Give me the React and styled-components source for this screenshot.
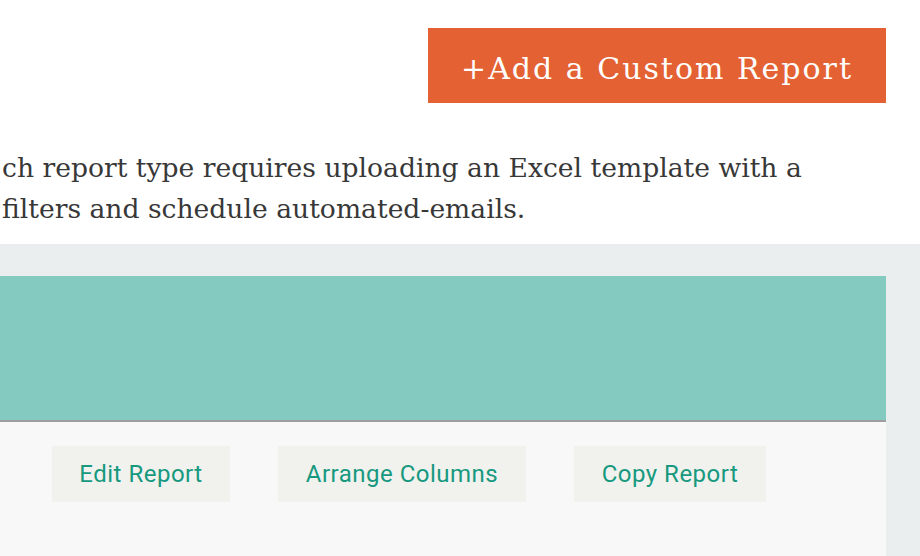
import React from 'react';
import styled, { createGlobalStyle } from 'styled-components';

const GlobalStyle = createGlobalStyle`
  html, body {
    margin: 0;
    padding: 0;
    background: #ffffff;
    overflow: hidden;
  }
  body {
    width: 920px;
    height: 556px;
  }
`;

const Page = styled.div`
  width: 920px;
  height: 556px;
  display: flex;
  flex-direction: column;
  overflow: hidden;
`;

const TopBar = styled.header`
  display: flex;
  justify-content: flex-end;
  padding: 28px 34px 0 0;
`;

const AddButton = styled.button`
  width: 458px;
  height: 75px;
  border: none;
  background: #e36132;
  color: #ffffff;
  font-family: 'DejaVu Serif', serif;
  font-size: 30px;
  letter-spacing: 2px;
  padding: 5px 0 0;
  cursor: pointer;
`;

const Intro = styled.p`
  margin: 0;
  padding: 44px 0 0 2px;
  height: 141px;
  box-sizing: border-box;
  font-family: 'DejaVu Serif', serif;
  font-size: 26.6px;
  line-height: 41px;
  color: #383838;
  white-space: nowrap;
`;

const Stage = styled.section`
  flex: 1;
  background: #ebeeee;
  padding: 32px 34px 0 0;
  display: flex;
  flex-direction: column;
`;

const Card = styled.div`
  flex: 1;
  display: flex;
  flex-direction: column;
  background: #f8f8f8;
`;

const CardHead = styled.div`
  height: 144px;
  background: #84cac0;
  border-bottom: 2px solid #9e9e9e;
`;

const Actions = styled.div`
  display: flex;
  gap: 48px;
  padding: 24px 0 0 52px;
`;

const ActionButton = styled.button`
  height: 56px;
  width: ${p => p.w}px;
  border: none;
  background: #f1f2ee;
  color: #17997f;
  font-family: Roboto, 'Liberation Sans', sans-serif;
  font-size: 24px;
  letter-spacing: 0.5px;
  padding: 0;
  cursor: pointer;
`;

export default function App() {
  return (
    <>
      <GlobalStyle />
      <Page>
        <TopBar>
          <AddButton>+Add a Custom Report</AddButton>
        </TopBar>
        <Intro>
          ch report type requires uploading an Excel template with a
          <br />
          filters and schedule automated-emails.
        </Intro>
        <Stage>
          <Card>
            <CardHead />
            <Actions>
              <ActionButton w={178}>Edit Report</ActionButton>
              <ActionButton w={248}>Arrange Columns</ActionButton>
              <ActionButton w={192}>Copy Report</ActionButton>
            </Actions>
          </Card>
        </Stage>
      </Page>
    </>
  );
}
